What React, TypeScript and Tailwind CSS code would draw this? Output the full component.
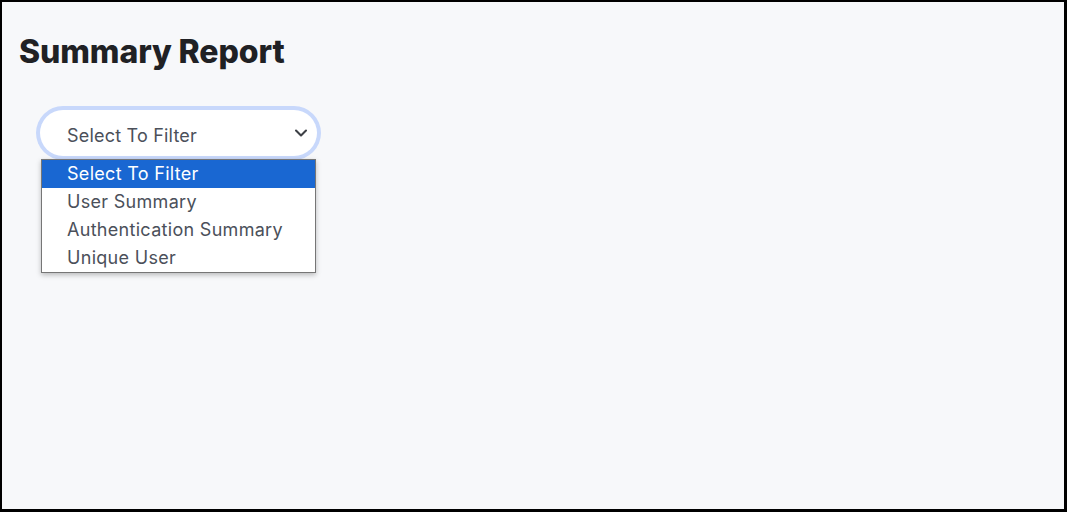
import { ChevronDown } from 'lucide-react';

const options = ['Select To Filter', 'User Summary', 'Authentication Summary', 'Unique User'];

export default function App() {
  const selected = 0;

  return (
    <div className="h-[512px] w-[1067px] overflow-hidden border-t-2 border-l-2 border-r-[3px] border-b-[3px] border-black bg-[#f7f8fa] font-['Inter',sans-serif]">
      <div className="px-[17px] pt-[34px]">
        {/* HEADER */}
        <h1 className="text-[32px] font-extrabold leading-[32px] tracking-[-0.1px] text-[#202124]">Summary Report</h1>

        {/* FILTER */}
        <div className="relative mt-[38px] ml-[17px] w-[285px]">
          <div className="rounded-full bg-[#c8d8fb] p-[4px]">
            <div className="flex h-[46px] items-center justify-between rounded-full bg-white pl-[27px] pr-[6px]">
              <span className="mt-[4px] text-[18px] tracking-[0.2px] text-[#4b505a]">Select To Filter</span>
              <ChevronDown className="h-[20px] w-[20px] text-[#3d4046]" strokeWidth={2.5} />
            </div>
          </div>

          {/* open list */}
          <ul className="absolute left-[5px] top-[53px] w-[275px] border border-[#767676] bg-white shadow-[0_2px_5px_rgba(0,0,0,0.25)]">
            {options.map((o, i) => (
              <li
                key={o}
                className={`h-[28px] pl-[25px] text-[18px] leading-[28px] tracking-[0.3px] ${
                  i === selected ? 'bg-[#1967d2] text-white' : 'text-[#4b505a]'
                }`}
              >
                {o}
              </li>
            ))}
          </ul>
        </div>
      </div>
    </div>
  );
}
